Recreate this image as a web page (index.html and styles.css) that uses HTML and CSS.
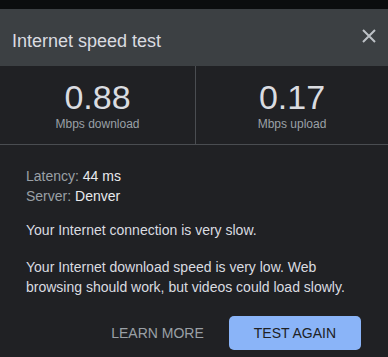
FILE: index.html
```html
<!DOCTYPE html>
<html lang="en">
<head>
<meta charset="utf-8">
<title>Internet speed test</title>
<link rel="stylesheet" href="styles.css">
</head>
<body>
<div class="backdrop"></div>
<div class="dialog">
  <div class="header">
    <div class="title">Internet speed test</div>
    <button class="close" aria-label="Close">
      <svg width="14" height="14" viewBox="0 0 14 14"><path d="M1 1L13 13M13 1L1 13" stroke="#bdc1c6" stroke-width="2" fill="none"/></svg>
    </button>
  </div>
  <div class="stats">
    <div class="stat">
      <div class="value">0.88</div>
      <div class="unit">Mbps download</div>
    </div>
    <div class="stat stat-right">
      <div class="value">0.17</div>
      <div class="unit">Mbps upload</div>
    </div>
  </div>
  <div class="content">
    <div class="meta"><span class="label">Latency:</span> 44 ms</div>
    <div class="meta"><span class="label">Server:</span> Denver</div>
    <p class="status">Your Internet connection is very slow.</p>
    <p class="detail">Your Internet download speed is very low. Web browsing should work, but videos could load slowly.</p>
    <div class="actions">
      <button class="btn btn-text">LEARN MORE</button>
      <button class="btn btn-primary">TEST AGAIN</button>
    </div>
  </div>
</div>
</body>
</html>
```
FILE: styles.css
```css
html, body {
  margin: 0;
  padding: 0;
  background: #0b0d0e;
  font-family: "Liberation Sans", Arial, sans-serif;
}
.backdrop {
  height: 9px;
  background: #0b0d0e;
}
.dialog {
  background: #202124;
  height: 348px;
}
.header {
  height: 57px;
  box-sizing: border-box;
  background: #3c4043;
  display: flex;
  justify-content: space-between;
  align-items: flex-start;
  padding: 0 12px;
}
.title {
  font-size: 18px;
  line-height: 20px;
  color: #dadce0;
  padding-top: 22px;
}
.close {
  margin-top: 20px;
  padding: 0;
  border: 0;
  background: none;
  width: 14px;
  height: 14px;
  display: block;
}
.close svg { display: block; }
.stats {
  display: grid;
  grid-template-columns: 195px 1fr;
  height: 79px;
  box-sizing: border-box;
  border-bottom: 1px solid #4a4d51;
}
.stat {
  text-align: center;
  padding-top: 14px;
}
.stat-right {
  border-left: 1px solid #4a4d51;
}
.value {
  font-size: 34px;
  line-height: 34px;
  color: #dadce0;
}
.unit {
  font-size: 12px;
  line-height: 14px;
  color: #9aa0a6;
  margin-top: 3px;
}
.content {
  padding: 21px 26px 0 26px;
  font-size: 14px;
  line-height: 20px;
  color: #dadce0;
}
.meta { color: #e8eaed; }
.label { color: #9aa0a6; }
.status { margin: 14px 0 0; }
.detail { margin: 17px 0 0; }
.actions {
  display: flex;
  justify-content: flex-end;
  margin-top: 19px;
  margin-right: 1px;
}
.btn {
  font-family: "Liberation Sans", Arial, sans-serif;
  font-size: 14px;
  height: 34px;
  padding: 0 25px;
  border: 0;
  border-radius: 5px;
  background: none;
  cursor: pointer;
}
.btn-text { color: #9aa0a6; }
.btn-primary {
  background: #8ab4f8;
  color: #202124;
}
```
